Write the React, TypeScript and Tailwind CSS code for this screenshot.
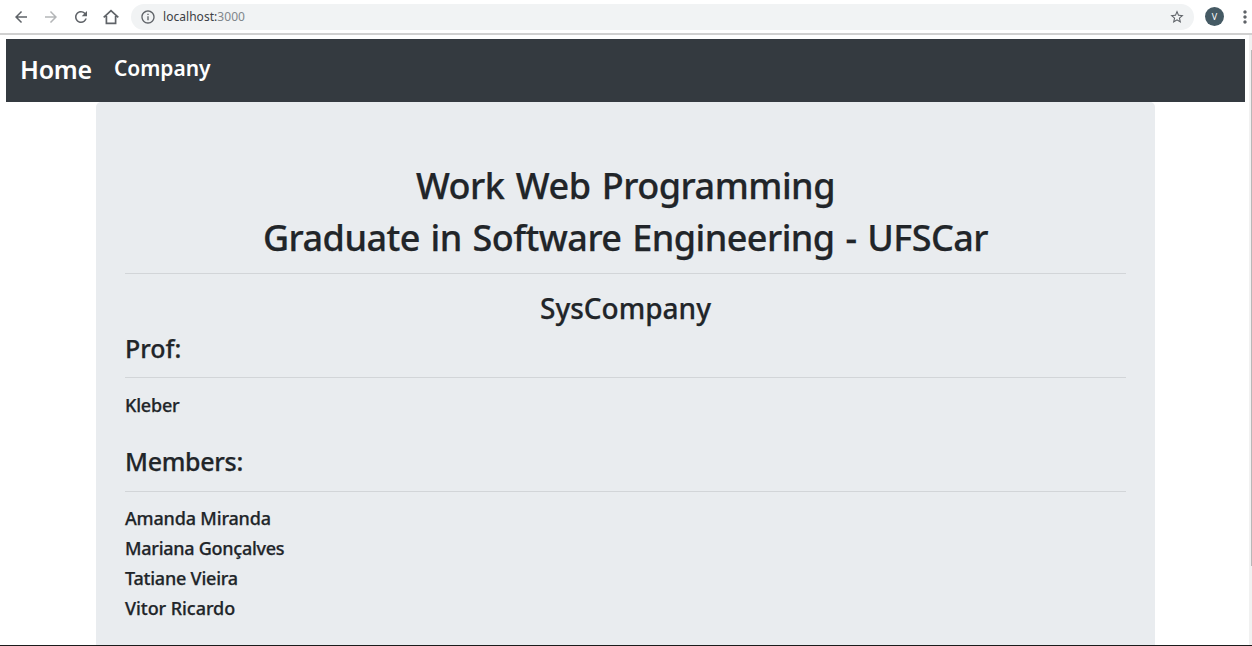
import React from "react";
import { MdArrowBack, MdArrowForward, MdRefresh, MdInfoOutline, MdStarBorder, MdMoreVert } from "react-icons/md";

const members = [
  { name: "Amanda Miranda", spacing: "tracking-[-0.17px]" },
  { name: "Mariana Gonçalves", spacing: "tracking-[-0.26px]" },
  { name: "Tatiane Vieira", spacing: "tracking-[-0.22px]" },
  { name: "Vitor Ricardo", spacing: "tracking-[-0.06px]" },
];

function HomeIcon() {
  return (
    <svg width="18" height="18" viewBox="0 0 18 18" fill="none" stroke="currentColor" strokeWidth="1.7">
      <path d="M1.7 9.4 9 2.6l7.3 6.8M4.4 8v7.3h9.2V8" />
    </svg>
  );
}

function BrowserBar() {
  return (
    <header className="flex h-[35px] shrink-0 items-center border-b-2 border-[#d0d0d0] bg-white text-[#5f6368]">
      <div className="flex w-[131px] shrink-0 items-center gap-[12px] pl-[12px]">
        <MdArrowBack size={18} />
        <MdArrowForward size={18} className="text-[#b4b6b8]" />
        <MdRefresh size={18} />
        <HomeIcon />
      </div>
      <div className="flex h-[26px] w-[1063px] shrink-0 items-center rounded-full bg-[#f1f3f4] pl-[9px] pr-[9px]">
        <MdInfoOutline size={16} />
        <span className="ml-[7px] flex-1 text-[12px] tracking-[0.04px] text-[#3c4043]">
          localhost:<span className="text-[#80868b]">3000</span>
        </span>
        <MdStarBorder size={16} />
      </div>
      <div className="ml-[11px] flex size-[19px] shrink-0 items-center justify-center rounded-full bg-[#455a64] text-[9px] text-white">V</div>
      <MdMoreVert size={20} className="ml-[11px] shrink-0" />
    </header>
  );
}

export default function App() {
  return (
    <div className="flex h-[646px] w-[1252px] flex-col overflow-hidden border-b border-[#1b1b1b] bg-white font-['Noto_Sans','Open_Sans',sans-serif] text-[#212529]">
      <BrowserBar />
      <div className="flex min-h-0 flex-1">
        <main className="flex w-[1249px] flex-col pl-[6px] pr-[4px] pt-[4px]">
          <nav className="flex h-[63px] shrink-0 items-center bg-[#343a40] pb-[2px] pl-[14px] font-semibold text-white">
            <a className="w-[94px] whitespace-nowrap text-[25px] tracking-[-0.25px]">Home</a>
            <a className="whitespace-nowrap pb-[1px] text-[21px] tracking-[-0.05px]">Company</a>
          </nav>
          <section className="ml-[90px] flex w-[1059px] flex-1 flex-col rounded-t-[5px] bg-[#e9ecef] pl-[29px] pr-[29px] pt-[58px] font-medium [-webkit-text-stroke:0.25px_#212529]">
            <h1 className="h-[52px] text-center text-[36px] leading-[52px] tracking-[-0.5px] [word-spacing:2.5px]">Work Web Programming</h1>
            <h1 className="h-[53px] text-center text-[36px] leading-[52px] tracking-[-0.55px] [word-spacing:2px]">Graduate in Software Engineering - UFSCar</h1>
            <hr className="mt-[8px] border-[#d2d5d8]" />
            <h2 className="mt-[14px] h-[40px] text-center text-[28px] leading-[40px]">SysCompany</h2>
            <h3 className="h-[40px] text-[25px] leading-[40px]">Prof:</h3>
            <hr className="mt-[9px] border-[#d2d5d8]" />
            <p className="mt-[12px] h-[30px] text-[18px] leading-[30px] tracking-[-0.2px]">Kleber</p>
            <h3 className="mt-[22px] h-[40px] text-[25px] leading-[39px] tracking-[-0.3px]">Members:</h3>
            <hr className="mt-[9px] border-[#d2d5d8]" />
            <ul className="mt-[12px] text-[18px] leading-[29.9px]">
              {members.map((m) => (
                <li key={m.name} className={m.spacing}>{m.name}</li>
              ))}
            </ul>
          </section>
        </main>
        <div className="flex w-[3px] flex-col items-end bg-[#f1f1f1] pt-[15px]">
          <div className="h-[516px] w-[1px] bg-[#b8b8b8]" />
        </div>
      </div>
    </div>
  );
}
